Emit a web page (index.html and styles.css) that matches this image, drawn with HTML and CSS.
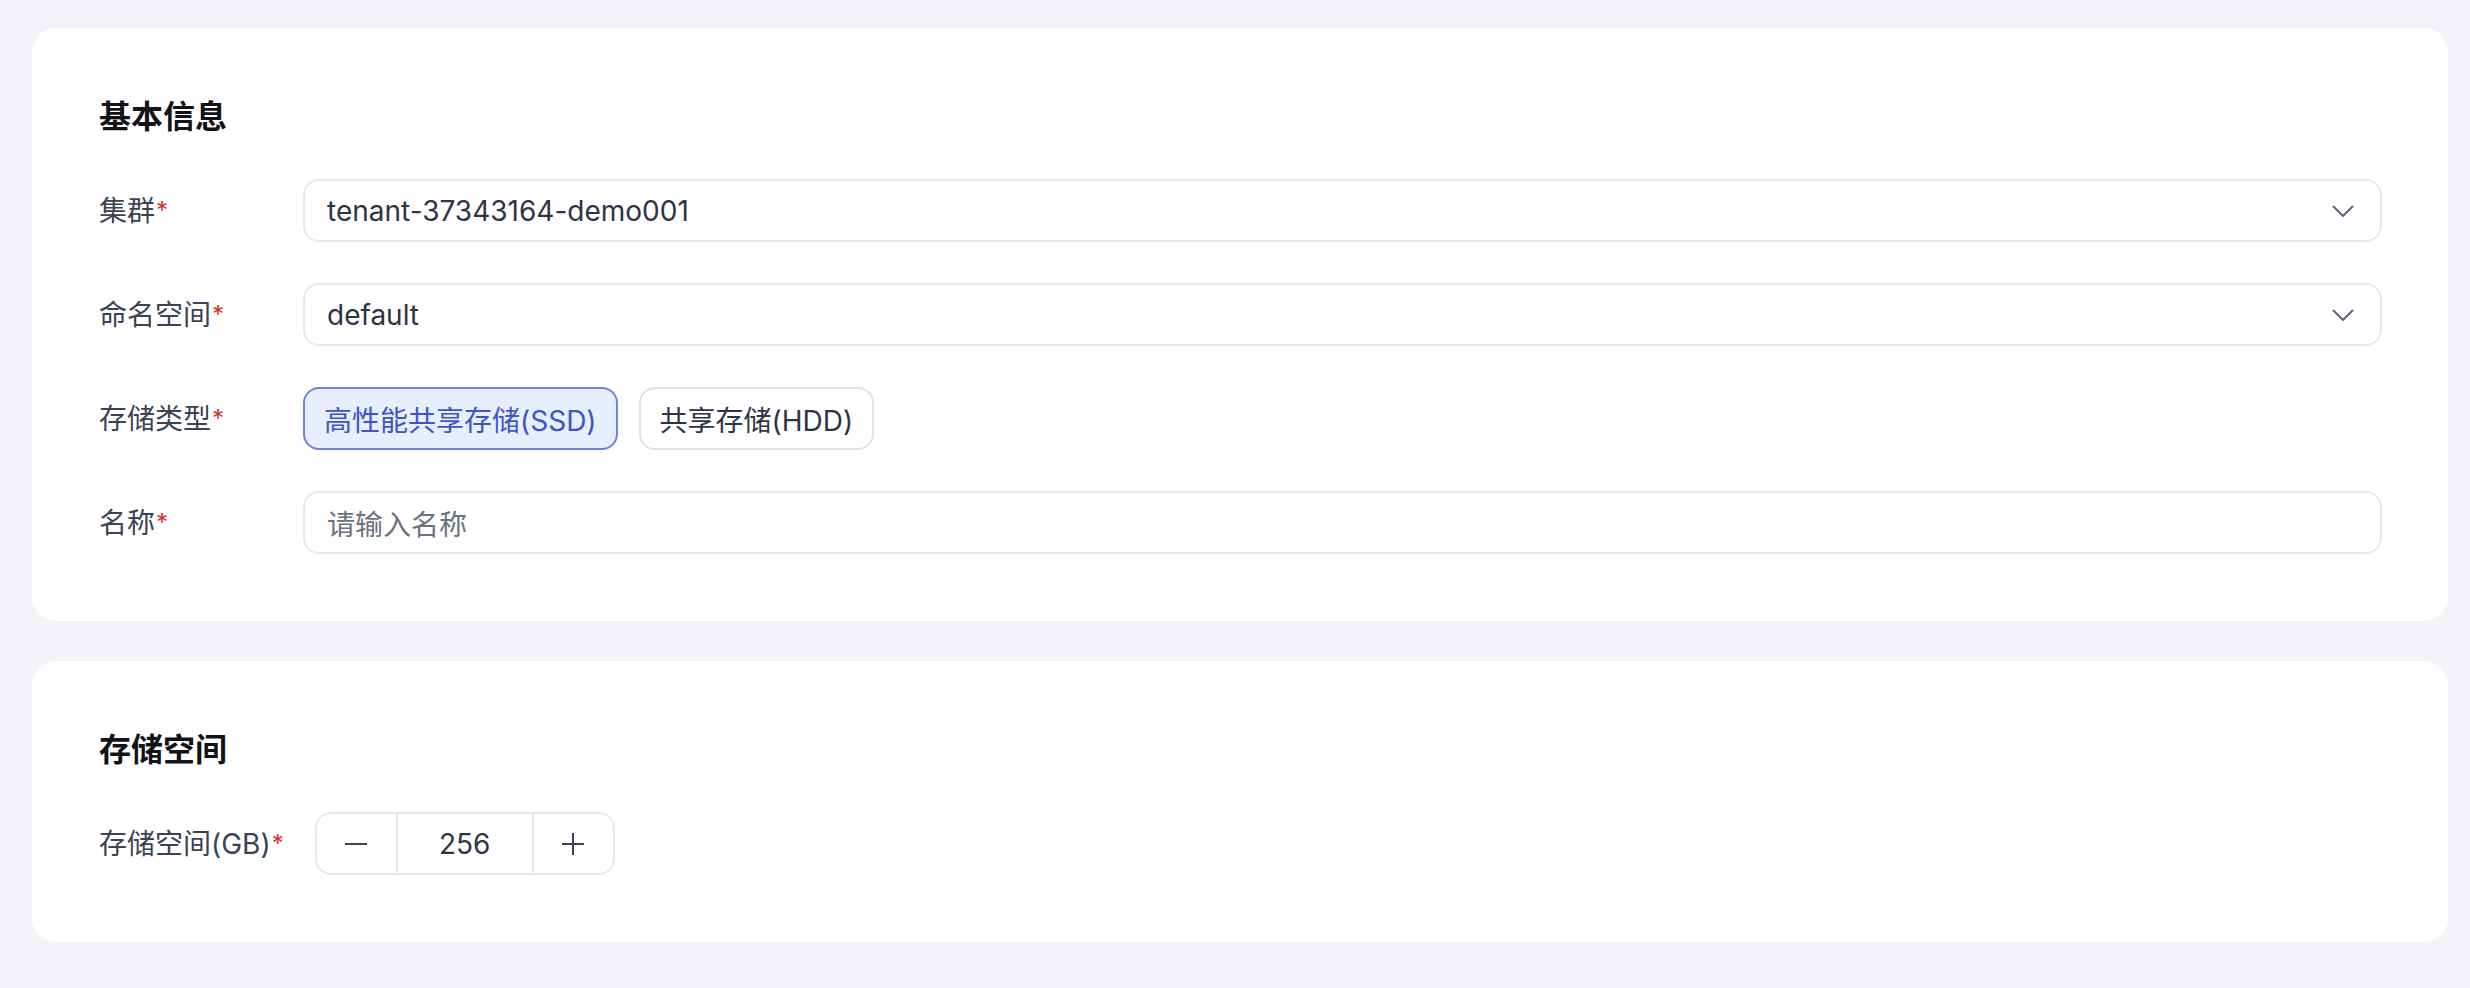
FILE: index.html
```html
<!DOCTYPE html>
<html lang="zh-CN">
<head>
<meta charset="utf-8">
<title>表单</title>
<link rel="stylesheet" href="styles.css">
</head>
<body>
<div class="page">
  <section class="card">
    <h2 class="card-title">基本信息</h2>
    <div class="form">
      <div class="row">
        <div class="label">集群<span class="req">*</span></div>
        <div class="field select">
          <span class="value">tenant-37343164-demo001</span>
          <svg class="chev" width="22" height="12" viewBox="0 0 22 12"><polyline points="1,1 11,11 21,1" fill="none" stroke="#5f6673" stroke-width="2"/></svg>
        </div>
      </div>
      <div class="row">
        <div class="label">命名空间<span class="req">*</span></div>
        <div class="field select">
          <span class="value">default</span>
          <svg class="chev" width="22" height="12" viewBox="0 0 22 12"><polyline points="1,1 11,11 21,1" fill="none" stroke="#5f6673" stroke-width="2"/></svg>
        </div>
      </div>
      <div class="row">
        <div class="label">存储类型<span class="req">*</span></div>
        <div class="options">
          <button class="opt active">高性能共享存储(SSD)</button>
          <button class="opt">共享存储(HDD)</button>
        </div>
      </div>
      <div class="row">
        <div class="label">名称<span class="req">*</span></div>
        <div class="field input">
          <span class="placeholder">请输入名称</span>
        </div>
      </div>
    </div>
  </section>
  <section class="card">
    <h2 class="card-title">存储空间</h2>
    <div class="form">
      <div class="row">
        <div class="label">存储空间(GB)<span class="req">*</span></div>
        <div class="stepper">
          <div class="step-btn">
            <svg width="24" height="24" viewBox="0 0 24 24"><line x1="1" y1="12" x2="23" y2="12" stroke="#3a4356" stroke-width="2"/></svg>
          </div>
          <div class="step-val">256</div>
          <div class="step-btn">
            <svg width="24" height="24" viewBox="0 0 24 24"><line x1="1" y1="12" x2="23" y2="12" stroke="#3a4356" stroke-width="2"/><line x1="12" y1="1" x2="12" y2="23" stroke="#3a4356" stroke-width="2"/></svg>
          </div>
        </div>
      </div>
    </div>
  </section>
</div>
</body>
</html>
```
FILE: styles.css
```css
* { box-sizing: border-box; }
html, body { margin: 0; padding: 0; }
body {
  background: #f3f4f8;
  font-family: Inter, "Noto Sans CJK SC", sans-serif;
  color: #3a4356;
}
.page {
  padding: 28px 22px 40px 32px;
  display: flex;
  flex-direction: column;
  gap: 40px;
}
.card {
  background: #ffffff;
  border-radius: 24px;
  padding: 66px 66px 67px 67px;
}
.card-title {
  margin: 0 0 40px 0;
  font-size: 32px;
  line-height: 45px;
  font-weight: 700;
  color: #111318;
}
.form {
  display: flex;
  flex-direction: column;
  gap: 41px;
}
.row {
  display: flex;
  align-items: center;
}
.label {
  min-width: 173px;
  margin-right: 31px;
  font-size: 28px;
  line-height: 40px;
  color: #3a4356;
  white-space: nowrap;
}
.req {
  color: #d0342c;
  font-size: 24px;
  margin-left: 1px;
  vertical-align: 2px;
}
.field {
  flex: 1;
  height: 63px;
  border: 2px solid #e6e8ec;
  border-radius: 16px;
  display: flex;
  align-items: center;
  padding: 0 26px 0 22px;
  font-size: 28px;
}
.select { justify-content: space-between; }
.value { color: #2d3446; }
.placeholder { color: #6b7180; }
.chev { display: block; }
.options {
  display: flex;
  gap: 21px;
}
.opt {
  height: 63px;
  padding: 0 19px;
  border: 2px solid #dfe2e7;
  border-radius: 16px;
  background: #ffffff;
  font-family: inherit;
  font-size: 28px;
  color: #2d3446;
}
.opt.active {
  background: #e7eefe;
  border-color: #6c85d6;
  color: #3d55c8;
}
.stepper {
  display: flex;
  height: 63px;
  border: 2px solid #e6e8ec;
  border-radius: 16px;
}
.step-btn {
  width: 79px;
  display: flex;
  align-items: center;
  justify-content: center;
}
.step-val {
  width: 138px;
  border-left: 2px solid #e6e8ec;
  border-right: 2px solid #e6e8ec;
  display: flex;
  align-items: center;
  justify-content: center;
  font-size: 28px;
  color: #2d3446;
}
```
